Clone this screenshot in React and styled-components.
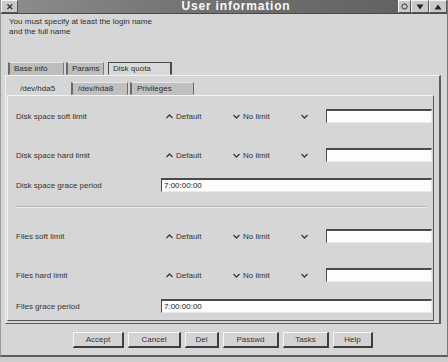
import React from 'react'
import styled, { createGlobalStyle } from 'styled-components'

const GlobalStyle = createGlobalStyle`
  html, body {
    margin: 0;
    background: #cdcdcd;
  }
  body {
    font-family: 'Liberation Sans', Arial, sans-serif;
    font-size: 8px;
    color: #2e2e2e;
  }
`

const Window = styled.div`
  width: 448px;
  height: 357px;
  box-sizing: border-box;
  background: #d6d6d6;
  border-left: 1px solid #9a9a9a;
  border-right: 1px solid #7a7a7a;
  border-bottom: 2px solid #5e5e5e;
  display: flex;
  flex-direction: column;
`

const TitleBar = styled.div`
  height: 13px;
  display: flex;
  align-items: stretch;
  background: linear-gradient(90deg, #8e8e8e 0%, #747474 40%, #5f5f5f 100%);
  border-bottom: 1px solid #4a4a4a;
`

const WmButton = styled.div`
  width: ${(p) => p.$w || 16}px;
  box-sizing: border-box;
  background: #c9c9c9;
  border: 1px solid;
  border-color: #f2f2f2 #555 #555 #f2f2f2;
  display: flex;
  align-items: center;
  justify-content: center;
  font-size: 9px;
  font-weight: bold;
  color: #333;
`

const Title = styled.div`
  flex: 1;
  text-align: center;
  padding-left: 56px;
  color: #fafafa;
  font-weight: bold;
  font-size: 12px;
  line-height: 13px;
  letter-spacing: 0.8px;
`

const Message = styled.div`
  padding: 3px 8px 0;
  line-height: 10px;
  height: 44px;
`

const TabRow = styled.div`
  display: flex;
  align-items: flex-end;
  padding-left: ${(p) => p.$pad}px;
  gap: 2px;
  height: 14px;
`

const Tab = styled.div`
  width: ${(p) => p.$w}px;
  margin-left: ${(p) => p.$ml || 0}px;
  height: 13px;
  box-sizing: border-box;
  padding-left: 4px;
  line-height: 12px;
  background: ${(p) => (p.$active ? '#d9d9d9' : '#bdbdbd')};
  border: 1px solid;
  border-color: ${(p) =>
    p.$active ? '#4a4a4a #4a4a4a transparent #4a4a4a' : '#e6e6e6 #7a7a7a transparent #6a6a6a'};
  border-left-width: ${(p) => (p.$active ? 1 : 2)}px;
  border-right-width: ${(p) => (p.$active ? 2 : 1)}px;
`

const InnerTab = styled(Tab)`
  padding-left: ${(p) => (p.$active ? 10 : 5)}px;
  background: ${(p) => (p.$active ? '#d6d6d6' : '#c0c0c0')};
  border-color: ${(p) =>
    p.$active ? 'transparent' : '#e6e6e6 #6a6a6a transparent #6a6a6a'};
`

const Frame = styled.div`
  margin: 0 6px 0 4px;
  height: 249px;
  box-sizing: border-box;
  border: 1px solid;
  border-color: #f0f0f0 #5c5c5c #5c5c5c #f0f0f0;
  border-right-width: 2px;
  padding: 5px 5px 0 1px;
`

const Panel = styled.div`
  height: 226px;
  box-sizing: border-box;
  border: 1px solid;
  border-color: #f4f4f4 #555 #555 #f4f4f4;
  padding: 0 1px 0 8px;
  display: flex;
  flex-direction: column;
`

const Row = styled.div`
  margin-top: ${(p) => p.$mt}px;
  height: 14px;
  display: grid;
  grid-template-columns: 145px 70px 67px 28px 1fr;
  align-items: center;
`

const GraceRow = styled(Row)`
  grid-template-columns: 145px 1fr;
`

const Label = styled.div`
  color: #333;
`

const Radio = styled.div`
  display: flex;
  align-items: center;
  gap: 3px;
  padding-left: ${(p) => p.$pl || 0}px;
  color: #333;
`

const Input = styled.div`
  height: 14px;
  box-sizing: border-box;
  background: #fdfdfd;
  border: 1px solid;
  border-color: #4a4a4a #eaeaea #eaeaea #4a4a4a;
  border-top-width: 2px;
  padding-left: 2px;
  line-height: 11px;
  color: #222;
`

const Divider = styled.div`
  margin-top: 14px;
  margin-right: 6px;
  height: 0;
  border-top: 1px solid #b4b4b4;
  border-bottom: 1px solid #ececec;
`

const ButtonBar = styled.div`
  display: flex;
  justify-content: center;
  gap: 4px;
  margin-top: 8px;
  padding-right: 2px;
`

const Button = styled.div`
  width: ${(p) => p.$w}px;
  height: 16px;
  box-sizing: border-box;
  background: #d3d3d3;
  border: 1px solid;
  border-color: #f6f6f6 #3e3e3e #3e3e3e #f6f6f6;
  border-right-width: 2px;
  border-bottom-width: 2px;
  text-align: center;
  line-height: 13px;
  color: #333;
`

const Chevron = ({ up }) => (
  <svg width='7' height='5' viewBox='0 0 7 5'>
    <path
      d={up ? 'M0.5 4 L3.5 1 L6.5 4' : 'M0.5 1 L3.5 4 L6.5 1'}
      fill='none'
      stroke='#3a3a3a'
      strokeWidth='1.3'
    />
  </svg>
)

const LimitRow = ({ label, mt }) => (
  <Row $mt={mt}>
    <Label>{label}</Label>
    <Radio $pl={5}>
      <Chevron up />
      Default
    </Radio>
    <Radio $pl={2}>
      <Chevron />
      No limit
    </Radio>
    <Radio $pl={3}>
      <Chevron />
    </Radio>
    <Input />
  </Row>
)

const GracePeriod = ({ label, mt }) => (
  <GraceRow $mt={mt}>
    <Label>{label}</Label>
    <Input>7:00:00:00</Input>
  </GraceRow>
)

const buttons = [
  ['Accept', 51],
  ['Cancel', 53],
  ['Del', 34],
  ['Passwd', 56],
  ['Tasks', 46],
  ['Help', 40],
]

const App = () => {
  return (
    <>
      <GlobalStyle />
      <Window>
        <TitleBar>
          <WmButton $w={17}>✕</WmButton>
          <Title>User information</Title>
          <WmButton $w={13}>
            <svg width='7' height='7' viewBox='0 0 7 7'>
              <circle cx='3.5' cy='3.5' r='2.6' fill='none' stroke='#333' strokeWidth='1' />
            </svg>
          </WmButton>
          <WmButton $w={18}>
            <svg width='8' height='6' viewBox='0 0 8 6'>
              <path d='M0.5 0.5 H7.5 L4 5.5 Z' fill='#222' />
            </svg>
          </WmButton>
          <WmButton $w={18}>
            <svg width='8' height='6' viewBox='0 0 8 6'>
              <path d='M0.5 5.5 H7.5 L4 0.5 Z' fill='#222' />
            </svg>
          </WmButton>
        </TitleBar>

        <Message>
          You must specify at least the login name
          <br />
          and the full name
        </Message>

        <TabRow $pad={7}>
          <Tab $w={56}>Base info</Tab>
          <Tab $w={38}>Params</Tab>
          <Tab $w={64} $ml={2} $active>
            Disk quota
          </Tab>
        </TabRow>

        <Frame>
          <TabRow $pad={2}>
            <InnerTab $w={60} $active>
              /dev/hda5
            </InnerTab>
            <InnerTab $w={57}>/dev/hda8</InnerTab>
            <InnerTab $w={64}>Privileges</InnerTab>
          </TabRow>
          <Panel>
            <LimitRow label='Disk space soft limit' mt={13} />
            <LimitRow label='Disk space hard limit' mt={25} />
            <GracePeriod label='Disk space grace period' mt={16} />
            <Divider />
            <LimitRow label='Files soft limit' mt={21} />
            <LimitRow label='Files hard limit' mt={25} />
            <GracePeriod label='Files grace period' mt={17} />
          </Panel>
        </Frame>

        <ButtonBar>
          {buttons.map(([text, w]) => (
            <Button key={text} $w={w}>
              {text}
            </Button>
          ))}
        </ButtonBar>
      </Window>
    </>
  )
}

export default App
